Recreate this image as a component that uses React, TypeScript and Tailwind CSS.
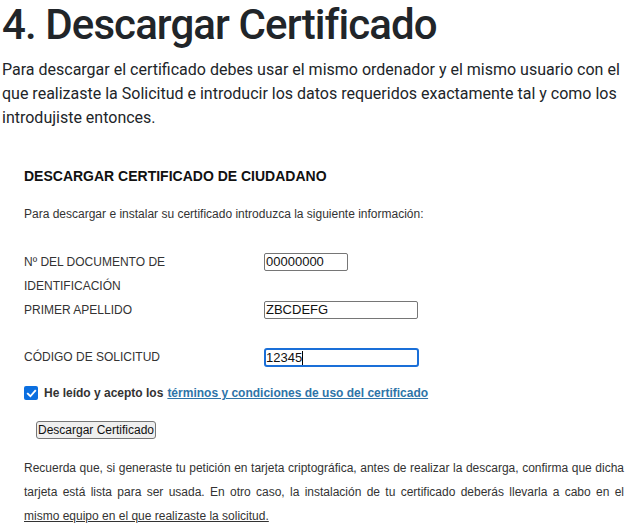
export default function App() {
  return (
    <div className="w-[642px] h-[528px] overflow-hidden bg-white text-[#212529]">
      <div className="px-[2px]">
        <h1 className="font-['Roboto',sans-serif] text-[42px] leading-[1.2] font-medium tracking-[-0.9px]">4. Descargar Certificado</h1>
        <p className="mt-[8px] font-['Roboto',sans-serif] text-[16px] leading-[24px]">
          Para descargar el certificado debes usar el mismo ordenador y el mismo usuario con el que realizaste la Solicitud e introducir los datos requeridos exactamente tal y como los introdujiste entonces.
        </p>
      </div>

      <div className="pl-[24px] pr-[18px] font-['Liberation_Sans',Arial,sans-serif] text-[#333]">
        <h2 className="mt-[36px] text-[14px] leading-[20px] font-bold text-[#111]">DESCARGAR CERTIFICADO DE CIUDADANO</h2>
        <p className="mt-[18px] text-[12px] leading-[20px]">Para descargar e instalar su certificado introduzca la siguiente información:</p>

        <div className="mt-[26px] flex text-[12px] leading-[24px]">
          <div className="w-[240px]">Nº DEL DOCUMENTO DE<br />IDENTIFICACIÓN</div>
          <div className="mt-[3px] w-[84px] h-[18px] border border-[#767676] rounded-[2px] px-[1px] text-[13px] leading-[16px] text-[#111]">00000000</div>
        </div>
        <div className="flex text-[12px] leading-[24px]">
          <div className="w-[240px]">PRIMER APELLIDO</div>
          <div className="mt-[3px] w-[154px] h-[18px] border border-[#767676] rounded-[2px] px-[1px] text-[13px] leading-[16px] text-[#111]">ZBCDEFG</div>
        </div>
        <div className="mt-[23px] flex text-[12px] leading-[24px]">
          <div className="w-[240px]">CÓDIGO DE SOLICITUD</div>
          <div className="mt-[3px] w-[155px] h-[19px] border-2 border-[#1a6fd8] rounded-[3px] text-[13px] leading-[15px] text-[#111] flex items-center">
            12345<span className="inline-block w-px h-[14px] bg-black" />
          </div>
        </div>

        <div className="mt-[12px] flex items-center h-[24px] text-[12px] font-bold">
          <div className="w-[14px] h-[14px] rounded-[2px] bg-[#0b6fe0] flex items-center justify-center">
            <svg width="11" height="11" viewBox="0 0 12 12" fill="none">
              <path d="M2 6.3 L4.8 9 L10 3" stroke="white" strokeWidth="2" strokeLinecap="square" />
            </svg>
          </div>
          <span className="ml-[6px] text-[#333]">He leído y acepto los </span>
          <a href="#" className="ml-[4px] text-[#2e74a8] underline">términos y condiciones de uso del certificado</a>
        </div>

        <button className="mt-[16px] ml-[12px] h-[18px] px-[1px] bg-[#efefef] border border-[#767676] rounded-[3px] text-[12px] leading-[14px] text-[#111]">Descargar Certificado</button>

        <p className="mt-[15px] text-[12px] leading-[24px] text-justify font-['Liberation_Sans_Narrow','Arial_Narrow',sans-serif]">
          Recuerda que, si generaste tu petición en tarjeta criptográfica, antes de realizar la descarga, confirma que dicha tarjeta está lista para ser usada. En otro caso, la instalación de tu certificado deberás llevarla a cabo en el <span className="underline">mismo equipo en el que realizaste la solicitud.</span>
        </p>
      </div>
    </div>
  );
}
